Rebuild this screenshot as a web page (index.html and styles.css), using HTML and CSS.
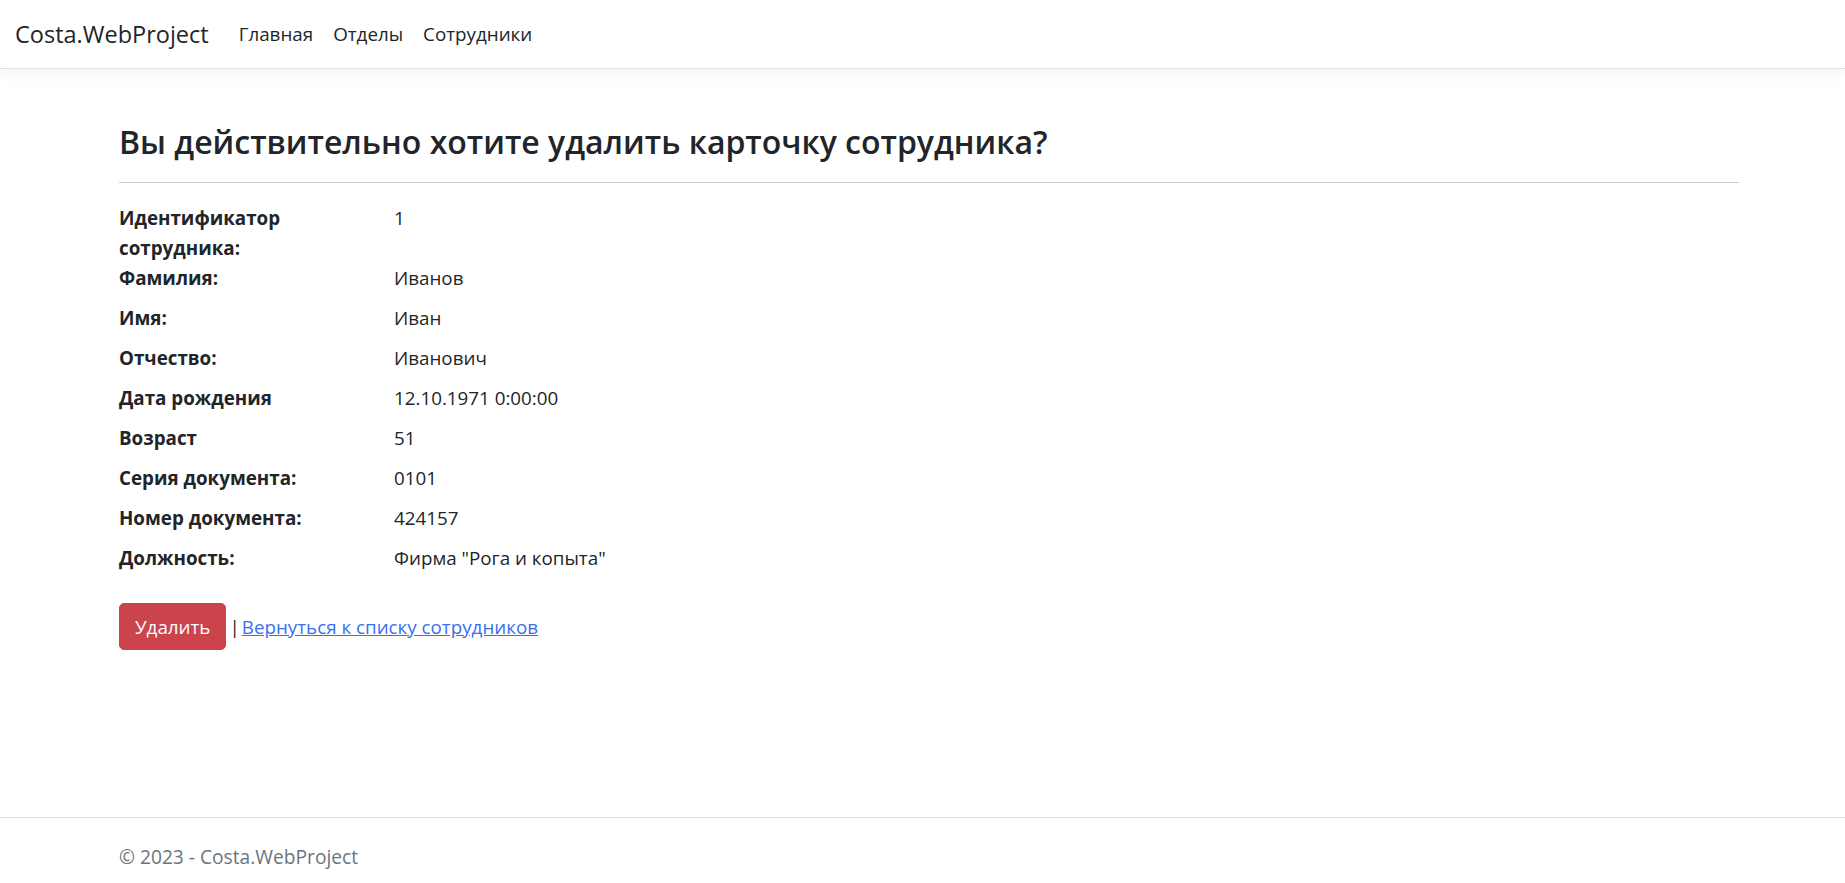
FILE: index.html
```html
<!DOCTYPE html>
<html lang="ru">
<head>
<meta charset="utf-8">
<title>Costa.WebProject</title>
<link rel="stylesheet" href="styles.css">
</head>
<body>
<header class="navbar">
  <a class="brand" href="#">Costa.WebProject</a>
  <nav class="nav">
    <a class="nav-link" href="#">Главная</a>
    <a class="nav-link" href="#">Отделы</a>
    <a class="nav-link" href="#">Сотрудники</a>
  </nav>
</header>
<main class="container">
  <h3 class="title">Вы действительно хотите удалить карточку сотрудника?</h3>
  <hr class="divider">
  <dl class="details">
    <dt>Идентификатор сотрудника:</dt><dd>1</dd>
    <dt>Фамилия:</dt><dd>Иванов</dd>
    <dt>Имя:</dt><dd>Иван</dd>
    <dt>Отчество:</dt><dd>Иванович</dd>
    <dt>Дата рождения</dt><dd>12.10.1971 0:00:00</dd>
    <dt>Возраст</dt><dd>51</dd>
    <dt>Серия документа:</dt><dd>0101</dd>
    <dt>Номер документа:</dt><dd>424157</dd>
    <dt>Должность:</dt><dd>Фирма "Рога и копыта"</dd>
  </dl>
  <form class="actions">
    <button type="button" class="btn-danger">Удалить</button>
    <span class="sep">|</span>
    <a class="back-link" href="#">Вернуться к списку сотрудников</a>
  </form>
</main>
<footer class="footer">
  <div class="footer-inner">© 2023 - Costa.WebProject</div>
</footer>
</body>
</html>
```

FILE: styles.css
```css
* { box-sizing: border-box; }
html, body { margin: 0; padding: 0; }
body {
  font-family: "Open Sans", "Noto Sans", sans-serif;
  font-size: 18.8px;
  line-height: 30px;
  color: #212529;
  background: #fff;
  height: 883px;
  display: flex;
  flex-direction: column;
  overflow: hidden;
}
.navbar {
  display: flex;
  align-items: center;
  height: 69px;
  padding: 0 15px;
  border-bottom: 1px solid #dee2e6;
  box-shadow: 0 5px 15px rgba(0,0,0,0.05);
}
.brand {
  font-size: 23.5px;
  color: #212529;
  text-decoration: none;
  margin-right: 20px;
  line-height: 37px;
}
.nav { display: flex; }
.nav-link {
  color: #212529;
  text-decoration: none;
  padding: 0 10px;
}
.container {
  flex: 1;
  padding: 0 106px 0 119px;
}
.title {
  margin: 52px 0 0;
  font-size: 32px;
  font-weight: 600;
  line-height: 42px;
}
.divider {
  margin: 19px 0 20px;
  border: 0;
  border-top: 1px solid #c8c9ca;
}
.details {
  display: grid;
  grid-template-columns: 245px 1fr;
  column-gap: 30px;
  margin: 0 0 20px;
}
.details dt { font-weight: 700; margin: 0; }
.details dd { margin: 0 0 10px; }
.actions { display: flex; align-items: center; }
.btn-danger {
  font-family: inherit;
  font-size: 18.8px;
  line-height: 30px;
  padding: 7.5px 15px;
  border: 1px solid #cc444b;
  border-radius: 5px;
  background: #cc444b;
  color: #fff;
}
.sep { margin: 0 2px 0 3px; }
.back-link { color: #3a6ff0; text-decoration: underline; }
.footer {
  height: 66px;
  border-top: 1px solid #dee2e6;
  color: #6c757d;
  padding: 24px 0 0 119px;
  white-space: nowrap;
}
.footer-inner { line-height: 30px; font-size: 19.2px; }
```
